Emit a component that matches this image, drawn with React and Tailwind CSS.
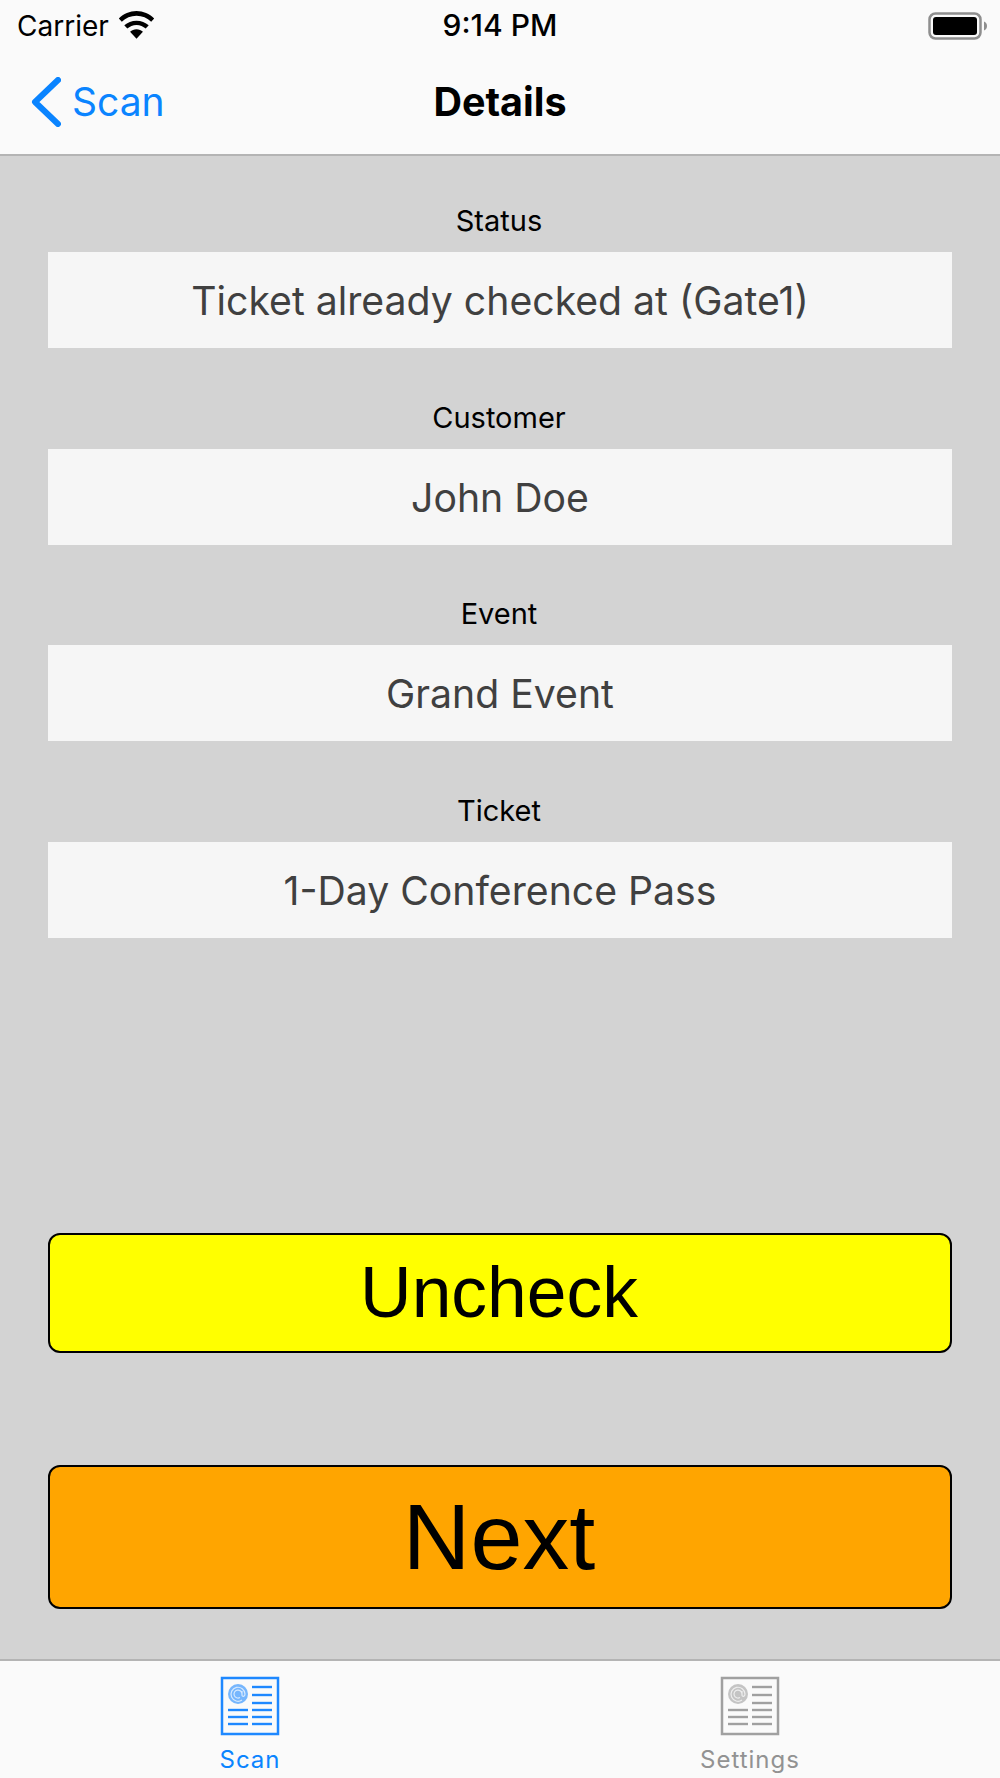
const FIELDS = [
  { label: 'Status', value: 'Ticket already checked at (Gate1)' },
  { label: 'Customer', value: 'John Doe' },
  { label: 'Event', value: 'Grand Event' },
  { label: 'Ticket', value: '1-Day Conference Pass' },
];

function Wifi() {
  return (
    <svg width="41" height="30" viewBox="0 0 38 28" fill="#000">
      <path d="M19 5.500c5.300 0 10.100 2.100 13.700 5.500l2.800-3C31.100 3.600 25.300 1 19 1S6.900 3.600 2.500 8l2.800 3C8.900 7.600 13.700 5.500 19 5.500z" transform="translate(0 -1)" />
      <path d="M19 13c3.300 0 6.300 1.300 8.600 3.400l2.800-3C27.400 10.600 23.400 9 19 9s-8.400 1.600-11.400 4.400l2.800 3C12.700 14.300 15.700 13 19 13z" />
      <path d="M19 17c-2.300 0-4.400.9-6 2.400l6 6.600 6-6.600c-1.600-1.500-3.700-2.400-6-2.400z" />
    </svg>
  );
}

function Battery() {
  return (
    <svg width="60" height="28" viewBox="0 0 60 28">
      <rect x="1.500" y="1.500" width="51" height="25" rx="6" fill="none" stroke="#8e8e8e" strokeWidth="2.500" />
      <rect x="5" y="5" width="44" height="18" rx="3" fill="#000" />
      <path d="M56 9.500c2 .6 3 2.400 3 4.500s-1 3.900-3 4.500z" fill="#8e8e8e" />
    </svg>
  );
}

function TabIcon({ color }) {
  return (
    <svg width="60" height="60" viewBox="0 0 60 60" fill="none" stroke={color}>
      <rect x="2" y="2" width="56" height="56" strokeWidth="2.500" />
      <circle cx="18" cy="18" r="10" fill={color} fillOpacity="0.6" stroke="none" />
      <path d="M22 18a4 4 0 1 0-2 3.500M22 15v4c0 2 3 2 3-1a7 7 0 1 0-3 6" strokeWidth="1.200" stroke="#fff" strokeOpacity="0.7" />
      {[11, 19, 27].map((y) => (
        <line key={y} x1="32" x2="52" y1={y} y2={y} strokeWidth="2.400" />
      ))}
      {[34, 41, 48].map((y) => (
        <g key={y}>
          <line x1="8" x2="28" y1={y} y2={y} strokeWidth="2.400" />
          <line x1="32" x2="52" y1={y} y2={y} strokeWidth="2.400" />
        </g>
      ))}
    </svg>
  );
}

export default function App() {
  return (
    <div className="w-[1000px] h-[1778px] flex flex-col bg-[#d3d3d3] font-['Inter','Liberation_Sans',sans-serif] text-black">
      {/* Header */}
      <div className="h-[156px] bg-[#fafafa] border-b-2 border-[#b4b4b4] flex flex-col">
        <div className="h-[50px] flex items-center justify-between pl-[17px] pr-[12px] pt-[1px] relative">
          <div className="flex items-center gap-[7px]">
            <span className="text-[28px]">Carrier</span>
            <Wifi />
          </div>
          <span className="absolute left-0 right-0 text-center text-[30px] font-medium">9:14 PM</span>
          <Battery />
        </div>
        <div className="flex-1 flex items-center relative pl-[31px]">
          <svg width="30" height="50" viewBox="0 0 30 50" fill="none" stroke="#0a84ff" strokeWidth="6" strokeLinecap="round" strokeLinejoin="round">
            <path d="M27 3 4 25l23 22" />
          </svg>
          <span className="ml-[11px] text-[39px] text-[#0a84ff]">Scan</span>
          <span className="absolute left-0 right-0 pt-[2px] text-center text-[39.500px] font-bold">Details</span>
        </div>
      </div>

      {/* Fields */}
      <div className="flex-1 flex flex-col px-[48px]">
        <div className="pt-[40px] flex flex-col gap-[44.500px]">
          {FIELDS.map((f) => (
            <div key={f.label} className="flex flex-col">
              <div className="h-[50px] flex items-center justify-center pr-[2px] text-[29px]">{f.label}</div>
              <div className="h-[96px] bg-[#f6f6f6] mt-[6px] pt-[3px] flex items-center justify-center text-[39.200px] text-[#404040]">{f.value}</div>
            </div>
          ))}
        </div>

        <button className="mt-[295px] h-[120px] pr-[2px] rounded-[12px] border-2 border-black bg-[#ffff00] text-[71.400px] font-['Liberation_Sans',sans-serif]">Uncheck</button>
        <button className="mt-[112px] h-[144px] pr-[2px] rounded-[12px] border-2 border-black bg-[#ffa500] text-[93.500px] font-['Liberation_Sans',sans-serif]">Next</button>
      </div>

      {/* Tab bar */}
      <div className="h-[119px] bg-[#fafafa] border-t-2 border-[#b4b4b4] flex">
        <div className="flex-1 flex flex-col items-center pt-[15px] text-[#0a84ff]">
          <TabIcon color="#1e88ff" />
          <span className="text-[24px] tracking-[1px] mt-[6px]">Scan</span>
        </div>
        <div className="flex-1 flex flex-col items-center pt-[15px] text-[#929292]">
          <TabIcon color="#a0a0a0" />
          <span className="text-[24px] tracking-[1px] mt-[6px]">Settings</span>
        </div>
      </div>
    </div>
  );
}
